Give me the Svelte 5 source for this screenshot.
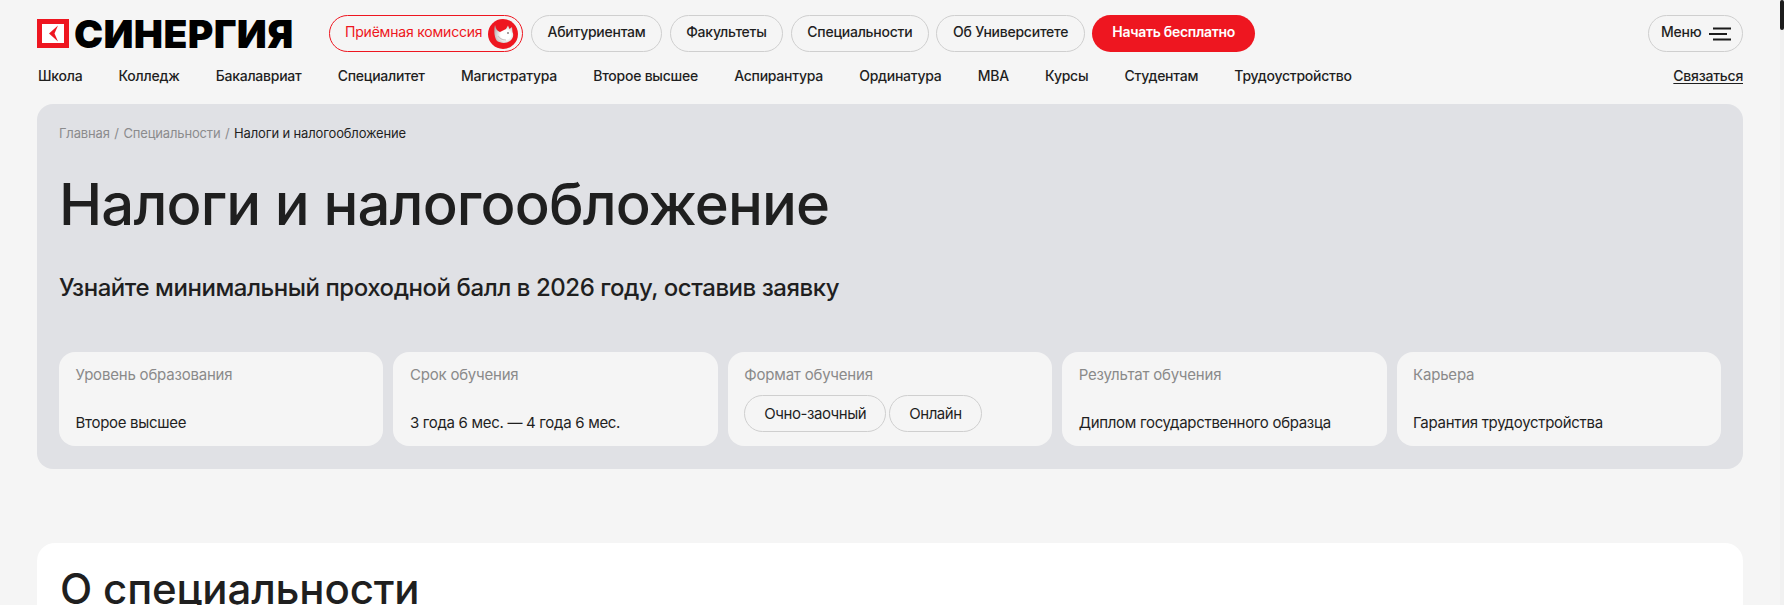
<script>
  const topLinks = ['Абитуриентам', 'Факультеты', 'Специальности', 'Об Университете']
  const subLinks = ['Школа', 'Колледж', 'Бакалавриат', 'Специалитет', 'Магистратура', 'Второе высшее', 'Аспирантура', 'Ординатура', 'MBA', 'Курсы', 'Студентам', 'Трудоустройство']
  const facts = [
    { label: 'Уровень образования', value: 'Второе высшее' },
    { label: 'Срок обучения', value: '3 года 6 мес. — 4 года 6 мес.' },
    { label: 'Формат обучения', chips: ['Очно-заочный', 'Онлайн'] },
    { label: 'Результат обучения', value: 'Диплом государственного образца' },
    { label: 'Карьера', value: 'Гарантия трудоустройства' },
  ]
</script>

<div class="window">
  <div class="page">
    <header>
      <div class="row-top">
        <a class="logo" href="#top">
          <svg width="32" height="29" viewBox="0 0 32 29">
            <rect width="32" height="29" fill="#ee1620" />
            <rect x="5" y="5" width="22" height="19" fill="#fff" />
            <path d="M21 6.5 L12 14.5 L21 22.5 L17.5 14.5 Z" fill="#ee1620" />
          </svg>
          <span>СИНЕРГИЯ</span>
        </a>
        <nav class="pills">
          <a class="pill pill-red" href="#top">
            <span class="pill-text">Приёмная комиссия</span>
            <svg class="rhino" width="30" height="30" viewBox="0 0 30 30">
              <defs>
                <radialGradient id="rh" cx="0.6" cy="0.55" r="0.65">
                  <stop offset="0.4" stop-color="#fff" />
                  <stop offset="1" stop-color="#b5aeae" />
                </radialGradient>
                <filter id="soft"><feGaussianBlur stdDeviation="0.45" /></filter>
              </defs>
              <circle cx="15" cy="15" r="15" fill="#ee1620" />
              <g filter="url(#soft)">
                <path d="M7 6 C8 10 9 12 12 13 C14 12 16 11 18 10 L20 6.5 L21.5 10 L24 8 L24.5 13 C26 16 25 20 22 22 C18 25 12 24 9 22 C6.5 19 5.5 12 7 6 Z" fill="url(#rh)" />
                <circle cx="20" cy="14" r="1" fill="#8d8585" />
                <path d="M10 17 C12 20 15 21 18 21" stroke="#c9c2c2" stroke-width="1.2" fill="none" />
              </g>
            </svg>
          </a>
          {#each topLinks as link}
            <a class="pill" href="#top"><span class="pill-text">{link}</span></a>
          {/each}
          <a class="pill-cta" href="#top"><span class="pill-text">Начать бесплатно</span></a>
        </nav>
        <button class="menu">
          <span class="pill-text">Меню</span>
          <svg width="22" height="14" viewBox="0 0 22 14">
            <path d="M4 1.5H22M0 7H18M4 12.5H22" stroke="#1b1b1b" stroke-width="2" />
          </svg>
        </button>
      </div>
      <div class="row-sub">
        <nav class="sub-links">
          {#each subLinks as link}
            <a href="#top">{link}</a>
          {/each}
        </nav>
        <a class="contact" href="#top">Связаться</a>
      </div>
    </header>

    <section class="hero">
      <div class="crumbs">
        <span>Главная</span> <i>/</i> <span>Специальности</span> <i>/</i> <b>Налоги и налогообложение</b>
      </div>
      <h1>Налоги и налогообложение</h1>
      <p class="lead">Узнайте минимальный проходной балл в 2026 году, оставив заявку</p>
      <div class="facts">
        {#each facts as fact}
          <div class="fact">
            <div class="fact-label">{fact.label}</div>
            {#if fact.chips}
              <div class="chips">
                {#each fact.chips as chip}
                  <span class="chip">{chip}</span>
                {/each}
              </div>
            {:else}
              <div class="fact-value">{fact.value}</div>
            {/if}
          </div>
        {/each}
      </div>
    </section>

    <section class="about">
      <h2>О специальности</h2>
    </section>
  </div>
  <div class="scrollbar"><div class="thumb"></div></div>
</div>

<style>
  :global(*, *::before, *::after) { box-sizing: border-box; }
  :global(body) {
    margin: 0;
    background: #f5f5f5;
    font-family: 'Inter', 'Liberation Sans', sans-serif;
    color: #1f1f1f;
    overflow: hidden;
  }

  a { color: inherit; text-decoration: none; }

  .window {
    display: flex;
    height: 605px;
    overflow: hidden;
  }

  .page {
    flex: 1;
    min-width: 0;
    padding: 15px 37px 0;
  }

  .scrollbar {
    width: 4px;
    background: #f1f1f1;
  }

  .thumb {
    height: 30px;
    background: #1c1c1c;
    border-radius: 2px;
  }

  /* ── Header ─────────────────────────────── */
  .row-top {
    display: flex;
    align-items: center;
    height: 37px;
  }

  .logo {
    display: flex;
    align-items: center;
    gap: 5px;
    width: 292px;
    flex-shrink: 0;
    font-size: 39px;
    font-weight: 900;
    letter-spacing: 0.35px;
    color: #000;
    line-height: 1;
  }

  .pills {
    display: flex;
    gap: 7.5px;
  }

  .pill-text { position: relative; top: -2px; }

  .pill {
    display: flex;
    align-items: center;
    height: 37px;
    padding: 0 15.6px;
    border: 1px solid #cfcfcf;
    border-radius: 19px;
    font-size: 14px;
    font-weight: 500;
    letter-spacing: -0.25px;
    color: #1f1f1f;
    white-space: nowrap;
  }

  .pill-red {
    border-color: #ee1620;
    color: #ee1620;
    padding-left: 15px;
    padding-right: 4px;
    gap: 6px;
    font-weight: 400;
    letter-spacing: -0.2px;
  }

  .pill-cta {
    display: flex;
    align-items: center;
    height: 37px;
    padding: 0 20px;
    background: #ee1620;
    border-radius: 19px;
    color: #fff;
    font-size: 14px;
    font-weight: 600;
    letter-spacing: -0.3px;
  }

  .menu {
    margin-left: auto;
    display: flex;
    align-items: center;
    gap: 8px;
    width: 95px;
    height: 37px;
    padding: 0 0 0 12px;
    background: transparent;
    border: 1px solid #cfcfcf;
    border-radius: 19px;
    font: inherit;
    font-size: 14px;
    font-weight: 500;
    letter-spacing: -0.25px;
    color: #1f1f1f;
  }

  .row-sub {
    display: flex;
    justify-content: space-between;
    align-items: center;
    height: 24px;
    margin-top: 11px;
    font-size: 14px;
    font-weight: 500;
    letter-spacing: -0.25px;
  }

  .sub-links {
    display: flex;
    gap: 36.2px;
    padding-left: 1px;
  }

  .contact { text-decoration: underline; text-underline-offset: 2px; }

  /* ── Hero ───────────────────────────────── */
  .hero {
    margin-top: 17px;
    height: 365px;
    padding: 21px 22px 23px;
    background: #e0e1e5;
    border-radius: 16px;
    display: flex;
    flex-direction: column;
  }

  .crumbs {
    font-size: 13px;
    line-height: 16px;
    letter-spacing: -0.15px;
    color: #8b8b8d;
  }

  .crumbs i { font-style: normal; margin: 0 1px; }
  .crumbs b { font-weight: 400; color: #1f1f1f; }

  h1 {
    margin: 27px 0 0;
    font-size: 58px;
    font-weight: 500;
    line-height: 72px;
    letter-spacing: -0.85px;
    color: #1f1f1f;
  }

  .lead {
    margin: 32px 0 0;
    font-size: 24px;
    font-weight: 500;
    line-height: 32px;
    letter-spacing: -0.45px;
    color: #1f1f1f;
  }

  .facts {
    margin-top: auto;
    display: grid;
    grid-template-columns: repeat(5, 1fr);
    gap: 10px;
  }

  .fact {
    display: flex;
    flex-direction: column;
    justify-content: space-between;
    height: 94px;
    padding: 13px 16.5px 13px;
    background: #f5f5f5;
    border-radius: 16px;
  }

  .fact-label {
    font-size: 15px;
    line-height: 20px;
    letter-spacing: -0.2px;
    color: #8a8a8a;
  }

  .fact-value {
    font-size: 15px;
    line-height: 20px;
    letter-spacing: -0.3px;
    color: #1f1f1f;
  }

  .chips {
    display: flex;
    gap: 3px;
  }

  .chip {
    display: flex;
    align-items: center;
    height: 37px;
    padding: 0 19px;
    margin-bottom: 1px;
    border: 1px solid #cfcfcf;
    border-radius: 19px;
    font-size: 15px;
    letter-spacing: -0.45px;
  }

  /* ── About ──────────────────────────────── */
  .about {
    margin-top: 74px;
    height: 200px;
    padding: 21px 23px;
    background: #fff;
    border-radius: 18px 18px 0 0;
  }

  h2 {
    margin: 0;
    font-size: 42px;
    font-weight: 500;
    line-height: 50px;
    letter-spacing: -0.15px;
    color: #1f1f1f;
  }
</style>
